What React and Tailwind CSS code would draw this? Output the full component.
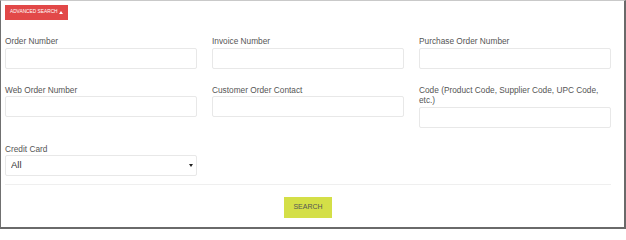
import React from "react";

const fields = [
  "Order Number",
  "Invoice Number",
  "Purchase Order Number",
  "Web Order Number",
  "Customer Order Contact",
  "Code (Product Code, Supplier Code, UPC Code, etc.)",
];

const Field = ({ label }) => (
  <div className="flex flex-col">
    <label className="mb-[1px] text-[8.3px] leading-[10.5px] text-[#555]">{label}</label>
    <input
      type="text"
      className="block h-[21px] w-full rounded-[2px] border border-[#e8e8e8] bg-white px-[5px] text-[9px] outline-none"
    />
  </div>
);

export default function App() {
  return (
    <div
      className="h-[229px] w-[626px] border-t border-l border-r-2 border-b-2 border-t-[#c9c9c9] border-l-[#707070] border-r-[#6a6a6a] border-b-[#6a6a6a] bg-white pt-[4px] pl-[4px]"
      style={{ fontFamily: '"Liberation Sans", Arial, sans-serif' }}
    >
      <div className="w-[606px]">
        <button
          type="button"
          className="flex h-[15px] w-[63px] items-center justify-center gap-[1.5px] bg-[#e24848] text-[4.8px] leading-none text-white"
        >
          ADVANCED SEARCH
          <svg width="4" height="3" viewBox="0 0 4 3">
            <path d="M0 3h4L2 0z" fill="#fff" />
          </svg>
        </button>

        <div className="mt-[16px] grid grid-cols-3 gap-x-[15px] gap-y-[16px]">
          {fields.map((f) => (
            <Field key={f} label={f} />
          ))}

          <div className="flex flex-col">
            <label className="mb-[1px] text-[8.3px] leading-[10.5px] text-[#555]">Credit Card</label>
            <div className="relative">
              <select className="block h-[21px] w-full appearance-none rounded-[2px] border border-[#e8e8e8] bg-white pl-[5px] text-[9.5px] text-[#333] outline-none">
                <option>All</option>
              </select>
              {/* dropdown arrow */}
              <svg
                className="pointer-events-none absolute right-[4px] top-[9px]"
                width="4"
                height="3"
                viewBox="0 0 4 3"
              >
                <path d="M0 0h4L2 3z" fill="#222" />
              </svg>
            </div>
          </div>
        </div>

        <div className="mt-[8px] h-px w-full bg-[#efefef]" />

        <div className="mt-[12px] flex justify-center">
          <button
            type="button"
            className="h-[21px] w-[48px] bg-[#d4df47] text-[7px] text-[#555]"
          >
            SEARCH
          </button>
        </div>
      </div>
    </div>
  );
}
